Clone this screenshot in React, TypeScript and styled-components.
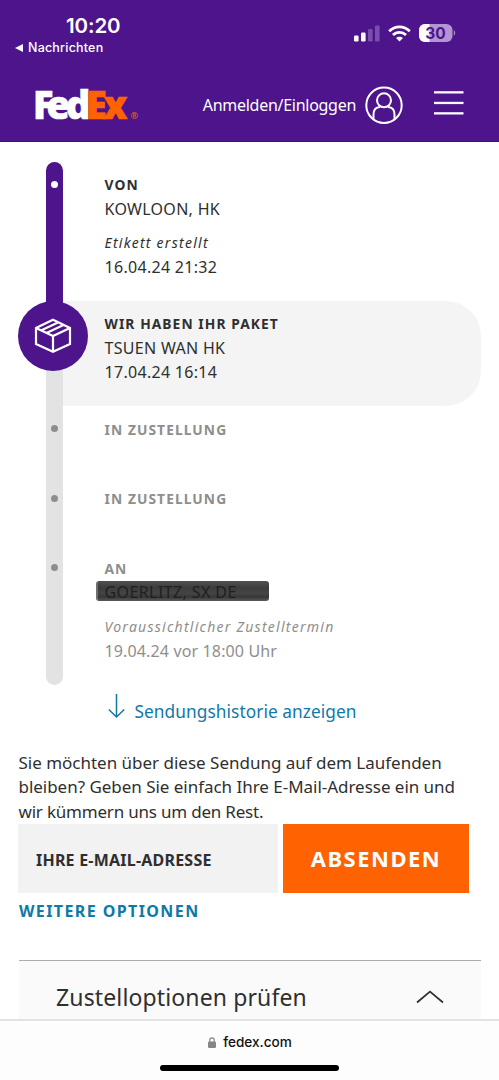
import React from "react";
import styled, { createGlobalStyle } from "styled-components";

const purple = "#4d148c";
const blue = "#0f79a9";

const GlobalStyle = createGlobalStyle`
  * { box-sizing: border-box; }
  body {
    margin: 0;
    background: #fff;
    color: #2f2f2f;
    font-family: "Noto Sans", "Open Sans", sans-serif;
  }
`;

const Screen = styled.div`
  width: 499px;
  height: 1080px;
  display: flex;
  flex-direction: column;
  overflow: hidden;
  background: #fff;
`;

const Header = styled.header`
  height: 142px;
  flex: none;
  background: ${purple};
  color: #fff;
  border-bottom: 1px solid #401077;
`;

const StatusBar = styled.div`
  height: 66px;
  display: flex;
  justify-content: space-between;
  padding: 13px 43px 0 15px;
  font-family: Inter, sans-serif;
`;

const ClockArea = styled.div`
  display: flex;
  flex-direction: column;
`;

const Clock = styled.div`
  margin-left: 51px;
  font-size: 20.5px;
  line-height: 25px;
  font-weight: 600;
  letter-spacing: -0.1px;
`;

const BackLink = styled.div`
  display: flex;
  align-items: center;
  gap: 5px;
  font-size: 12.5px;
  line-height: 19px;
  font-weight: 500;
  letter-spacing: 0.2px;
`;

const StatusIcons = styled.div`
  display: flex;
  align-items: center;
  gap: 8px;
  height: 40px;
`;

const NavBar = styled.nav`
  height: 76px;
  display: flex;
  align-items: center;
  padding: 2px 35px 0 35px;
`;

const Login = styled.a`
  display: flex;
  align-items: center;
  gap: 9px;
  margin-left: auto;
  margin-right: 31px;
  font-size: 16px;
  letter-spacing: -0.28px;
`;

const Timeline = styled.section`
  flex: none;
  margin-top: 20px;
  padding: 0 18px;
`;

const Step = styled.div<{ $height: number; $muted?: boolean }>`
  display: grid;
  grid-template-columns: 70px 1fr;
  height: ${(p) => p.$height}px;
  color: ${(p) => (p.$muted ? "#8e8e8e" : "#2f2f2f")};
`;

const ActiveStep = styled(Step)`
  background: linear-gradient(to right, #fff 36px, #f4f4f4 36px);
  border-radius: 0 35px 35px 0;
`;

const Rail = styled.div<{ $fill: string; $round?: string }>`
  width: 17px;
  height: 100%;
  margin-left: 28px;
  padding-top: 19px;
  display: flex;
  justify-content: center;
  background: ${(p) => p.$fill};
  border-radius: ${(p) => p.$round || "0"};
`;

const ActiveRail = styled(Rail)`
  padding-top: 0;
`;

const Dot = styled.span<{ $color: string }>`
  width: 7px;
  height: 7px;
  border-radius: 50%;
  background: ${(p) => p.$color};
`;

const Badge = styled.div`
  flex: none;
  width: 70px;
  height: 70px;
  margin-right: 2.5px;
  border-radius: 50%;
  background: ${purple};
  display: flex;
  align-items: center;
  justify-content: center;
`;

const StepText = styled.div<{ $top?: number }>`
  padding: ${(p) => p.$top || 11}px 0 0 16.5px;
`;

const Line = styled.div<{ $spacing?: number }>`
  font-size: 16px;
  line-height: 24px;
  letter-spacing: ${(p) => p.$spacing ?? 0.3}px;
  white-space: nowrap;
`;

const Title = styled(Line)`
  font-size: 13.8px;
  font-weight: 700;
  letter-spacing: 1.07px;
`;

const Note = styled(Line)`
  margin-top: 10px;
  font-size: 14px;
  font-style: italic;
  letter-spacing: 1.26px;
`;

const Redacted = styled(Line)`
  width: 173px;
  height: 20px;
  margin: 0 0 14px -9px;
  padding-left: 7px;
  line-height: 22px;
  color: #1f1f1f;
  border-radius: 3px;
  background: linear-gradient(to bottom, #505050, #3c3c3c 35%, #454545 60%, #383838 80%, #5a5a5a);
  border-left: 2px solid #707070;
`;

const LastNote = styled(Note)`
  margin-top: 0;
`;

const HistoryLink = styled.a`
  flex: none;
  display: flex;
  align-items: center;
  height: 30px;
  margin: 11px 0 0 108px;
  gap: 9.5px;
  color: ${blue};
  font-size: 17.3px;
  letter-spacing: 0.06px;
  white-space: nowrap;
`;

const ArrowIcon = styled.svg`
  margin-top: -9px;
`;

const Paragraph = styled.p`
  flex: none;
  margin: 25px 0 0 18.5px;
  font-size: 17px;
  line-height: 24.333px;
  white-space: nowrap;
`;

const ParagraphLine = styled.span<{ $spacing: number }>`
  display: block;
  letter-spacing: ${(p) => p.$spacing}px;
`;

const Form = styled.div`
  flex: none;
  display: flex;
  gap: 5px;
  height: 69px;
  margin: 0 0 0 18px;
`;

const EmailField = styled.div`
  width: 260px;
  padding: 3px 0 0 18px;
  display: flex;
  align-items: center;
  background: #f2f2f2;
  font-size: 16px;
  font-weight: 700;
  letter-spacing: 0.22px;
`;

const SubmitButton = styled.div`
  width: 186px;
  display: flex;
  align-items: center;
  justify-content: center;
  background: #ff6200;
  color: #fff;
  font-size: 22px;
  font-weight: 700;
  letter-spacing: 1.5px;
`;

const MoreLink = styled.a`
  flex: none;
  margin: 6px 0 0 19px;
  color: ${blue};
  font-size: 16px;
  line-height: 24px;
  font-weight: 700;
  letter-spacing: 1.4px;
`;

const Accordion = styled.div`
  flex: none;
  height: 59px;
  margin: 37px 18.5px 0 18.5px;
  padding: 14px 37px 0 37.5px;
  display: flex;
  align-items: center;
  justify-content: space-between;
  border-top: 1.5px solid #acacac;
  background: #fafafa;
  font-size: 23px;
  letter-spacing: 0.13px;
`;

const BrowserBar = styled.footer`
  flex: none;
  height: 61px;
  display: flex;
  flex-direction: column;
  align-items: center;
  border-top: 2px solid #e3e3e4;
  background: #fdfdfe;
  color: #111;
`;

const Address = styled.div`
  display: flex;
  align-items: center;
  gap: 7px;
  margin: 11.5px 0 0 1px;
  font-family: Inter, sans-serif;
  font-size: 13.6px;
  line-height: 20px;
  font-weight: 500;
`;

const HomeIndicator = styled.div`
  width: 179px;
  height: 6px;
  margin-top: 12.5px;
  border-radius: 3px;
  background: #000;
`;

const LogoText = styled.svg`
  overflow: visible;
  font-family: "Open Sans", sans-serif;
  font-weight: 800;
`;

const Logo = () => (
  <LogoText width="104" height="34" viewBox="0 0 104 34">
    <text x="-2 11.5 31 51 68.5" y="30.5" fontSize="38" fill="#fff" stroke="#fff" strokeWidth="0.6">
      Fed<tspan fill="#ff6200" stroke="#ff6200">Ex</tspan>
    </text>
    <text x="95.5" y="30.5" fontSize="9" fontWeight="600" fill="#ff6200">®</text>
  </LogoText>
);

const Signal = () => (
  <svg width="26" height="17" viewBox="0 0 26 17" fill="#fff">
    <rect x="0" y="10.5" width="4.6" height="6" rx="1.2" />
    <rect x="7" y="7.5" width="4.6" height="9" rx="1.2" />
    <rect x="14" y="4" width="4.6" height="12.5" rx="1.2" opacity=".25" />
    <rect x="21" y="0.5" width="4.6" height="16" rx="1.2" opacity=".25" />
  </svg>
);

const Wifi = () => (
  <svg width="23" height="17" viewBox="0 0 23 17" fill="none" stroke="#fff" strokeWidth="2.8">
    <path d="M1.2 6.2C7 .3 16 .3 21.8 6.2" />
    <path d="M5 10.1c3.7-3.7 9.3-3.7 13 0" />
    <path d="M11.5 16.5l-3.5-3.4c2-1.9 5-1.9 7 0z" fill="#fff" stroke="none" />
  </svg>
);

const Battery = () => (
  <svg width="37" height="18" viewBox="0 0 37 18">
    <rect width="33.5" height="18" rx="6" fill="#b295d2" />
    <path d="M6 0h4.5v18H6a6 6 0 0 1-6-6V6a6 6 0 0 1 6-6z" fill="#fff" />
    <path d="M34.8 6.3c1.8.8 1.8 4.6 0 5.4z" fill="#b295d2" />
    <text x="16.5" y="14.6" textAnchor="middle" fontFamily="Inter" fontWeight="700" fontSize="15.5" fill={purple}>30</text>
  </svg>
);

const UserIcon = () => (
  <svg width="38" height="38" viewBox="0 0 38 38" fill="none" stroke="#fff" strokeWidth="2">
    <circle cx="19" cy="19.3" r="17.7" />
    <circle cx="19" cy="14.3" r="7" />
    <path d="M8.5 33.300v-4.500q0-7.500 6.500-7.700M29.500 33.300v-4.500q0-7.500-6.500-7.700" />
  </svg>
);

const MenuIcon = () => (
  <svg width="30" height="28" viewBox="0 0 30 28" fill="#fff">
    <rect y="0.2" width="29.5" height="2.3" />
    <rect y="10.8" width="29.5" height="2.3" />
    <rect y="21.2" width="29.5" height="2.3" />
  </svg>
);

const BoxIcon = () => (
  <svg width="38" height="36" viewBox="0 0 38 36" fill="none" stroke="#fff" strokeWidth="2.2">
    <path d="M19 1.8 36 10v16L19 33.8 2 26V10zM2 10l17 8 17-8M19 18v15.8M7 12.4l17-8M12.5 15l17-8" />
  </svg>
);

export default function App() {
  return (
    <Screen>
      <GlobalStyle />
      <Header>
        <StatusBar>
          <ClockArea>
            <Clock>10:20</Clock>
            <BackLink>
              <svg width="8" height="8" viewBox="0 0 8 8"><path d="M0 4 8 0v8z" fill="#fff" /></svg>
              Nachrichten
            </BackLink>
          </ClockArea>
          <StatusIcons>
            <Signal />
            <Wifi />
            <Battery />
          </StatusIcons>
        </StatusBar>
        <NavBar>
          <Logo />
          <Login>
            Anmelden/Einloggen
            <UserIcon />
          </Login>
          <MenuIcon />
        </NavBar>
      </Header>

      <Timeline>
        <Step $height={139}>
          <Rail $fill={purple} $round="9px 9px 0 0"><Dot $color="#fff" /></Rail>
          <StepText>
            <Title>VON</Title>
            <Line>KOWLOON, HK</Line>
            <Note>Etikett erstellt</Note>
            <Line>16.04.24 21:32</Line>
          </StepText>
        </Step>
        <ActiveStep $height={105}>
          <ActiveRail $fill={`linear-gradient(${purple} 36px, #e3e3e3 36px)`}>
            <Badge><BoxIcon /></Badge>
          </ActiveRail>
          <StepText>
            <Title>WIR HABEN IHR PAKET</Title>
            <Line>TSUEN WAN HK</Line>
            <Line>17.04.24 16:14</Line>
          </StepText>
        </ActiveStep>
        <Step $height={70} $muted>
          <Rail $fill="#e3e3e3"><Dot $color="#8e8e8e" /></Rail>
          <StepText $top={12}><Title>IN ZUSTELLUNG</Title></StepText>
        </Step>
        <Step $height={69} $muted>
          <Rail $fill="#e3e3e3"><Dot $color="#8e8e8e" /></Rail>
          <StepText><Title>IN ZUSTELLUNG</Title></StepText>
        </Step>
        <Step $height={140} $muted>
          <Rail $fill="#e3e3e3" $round="0 0 9px 9px"><Dot $color="#8e8e8e" /></Rail>
          <StepText $top={12}>
            <Title>AN</Title>
            <Redacted $spacing={0.4}>GOERLITZ, SX DE</Redacted>
            <LastNote>Voraussichtlicher Zustelltermin</LastNote>
            <Line $spacing={0.14}>19.04.24 vor 18:00 Uhr</Line>
          </StepText>
        </Step>
      </Timeline>

      <HistoryLink>
        <ArrowIcon width="17" height="25" viewBox="0 0 17 25" fill="none" stroke={blue} strokeWidth="1.5">
          <path d="M8.5 0v23M.8 15.5l7.7 7.5 7.7-7.5" />
        </ArrowIcon>
        Sendungshistorie anzeigen
      </HistoryLink>

      <Paragraph>
        <ParagraphLine $spacing={-0.01}>Sie möchten über diese Sendung auf dem Laufenden</ParagraphLine>
        <ParagraphLine $spacing={-0.03}>bleiben? Geben Sie einfach Ihre E-Mail-Adresse ein und</ParagraphLine>
        <ParagraphLine $spacing={-0.2}>wir kümmern uns um den Rest.</ParagraphLine>
      </Paragraph>

      <Form>
        <EmailField>IHRE E-MAIL-ADRESSE</EmailField>
        <SubmitButton>ABSENDEN</SubmitButton>
      </Form>
      <MoreLink>WEITERE OPTIONEN</MoreLink>

      <Accordion>
        Zustelloptionen prüfen
        <svg width="28" height="14" viewBox="0 0 28 14" fill="none" stroke="#2f2f2f" strokeWidth="1.7">
          <path d="M1 12.5 14 1.5l13 11" />
        </svg>
      </Accordion>

      <BrowserBar>
        <Address>
          <svg width="8" height="11" viewBox="0 0 8 11">
            <rect y="4.5" width="8" height="6.5" rx="1.2" fill="#858585" />
            <path d="M1.8 5V3a2.2 2.2 0 0 1 4.4 0v2" fill="none" stroke="#858585" strokeWidth="1.2" />
          </svg>
          fedex.com
        </Address>
        <HomeIndicator />
      </BrowserBar>
    </Screen>
  );
}
